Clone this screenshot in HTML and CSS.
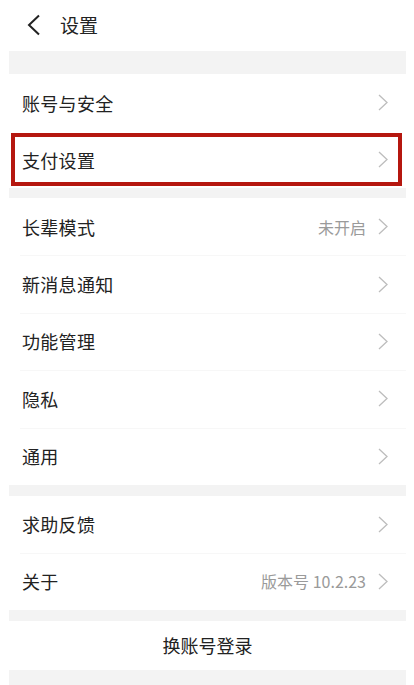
FILE: index.html
```html
<!DOCTYPE html>
<html lang="zh-CN">
<head>
<meta charset="utf-8">
<title>设置</title>
<link rel="stylesheet" href="styles.css">
</head>
<body>
<div class="screen">
  <header class="topbar">
    <svg class="back" width="14" height="22" viewBox="0 0 14 22"><polyline points="12,1.5 2,11 12,20.5" fill="none" stroke="#222" stroke-width="2" stroke-linejoin="miter"/></svg>
    <span class="title">设置</span>
  </header>
  <div class="band band-top"></div>
  <div class="group">
    <div class="row"><span class="label">账号与安全</span><span class="right"><svg class="chev" width="10" height="17" viewBox="0 0 10 17"><polyline points="1,1 9,8.5 1,16" fill="none" stroke="#bdbdbd" stroke-width="1.3"/></svg></span></div>
    <div class="row row-marked"><span class="label">支付设置</span><span class="right"><svg class="chev" width="10" height="17" viewBox="0 0 10 17"><polyline points="1,1 9,8.5 1,16" fill="none" stroke="#bdbdbd" stroke-width="1.3"/></svg></span></div>
  </div>
  <div class="band band-mid"></div>
  <div class="group group-five">
    <div class="row"><span class="label">长辈模式</span><span class="right"><span class="value">未开启</span><svg class="chev" width="10" height="17" viewBox="0 0 10 17"><polyline points="1,1 9,8.5 1,16" fill="none" stroke="#bdbdbd" stroke-width="1.3"/></svg></span></div>
    <div class="row"><span class="label">新消息通知</span><span class="right"><svg class="chev" width="10" height="17" viewBox="0 0 10 17"><polyline points="1,1 9,8.5 1,16" fill="none" stroke="#bdbdbd" stroke-width="1.3"/></svg></span></div>
    <div class="row"><span class="label">功能管理</span><span class="right"><svg class="chev" width="10" height="17" viewBox="0 0 10 17"><polyline points="1,1 9,8.5 1,16" fill="none" stroke="#bdbdbd" stroke-width="1.3"/></svg></span></div>
    <div class="row"><span class="label">隐私</span><span class="right"><svg class="chev" width="10" height="17" viewBox="0 0 10 17"><polyline points="1,1 9,8.5 1,16" fill="none" stroke="#bdbdbd" stroke-width="1.3"/></svg></span></div>
    <div class="row"><span class="label">通用</span><span class="right"><svg class="chev" width="10" height="17" viewBox="0 0 10 17"><polyline points="1,1 9,8.5 1,16" fill="none" stroke="#bdbdbd" stroke-width="1.3"/></svg></span></div>
  </div>
  <div class="band band-mid2"></div>
  <div class="group">
    <div class="row"><span class="label">求助反馈</span><span class="right"><svg class="chev" width="10" height="17" viewBox="0 0 10 17"><polyline points="1,1 9,8.5 1,16" fill="none" stroke="#bdbdbd" stroke-width="1.3"/></svg></span></div>
    <div class="row"><span class="label">关于</span><span class="right"><span class="value">版本号 10.2.23</span><svg class="chev" width="10" height="17" viewBox="0 0 10 17"><polyline points="1,1 9,8.5 1,16" fill="none" stroke="#bdbdbd" stroke-width="1.3"/></svg></span></div>
  </div>
  <div class="band band-small"></div>
  <div class="switch">换账号登录</div>
  <div class="band band-bottom"></div>
</div>
</body>
</html>
```

FILE: styles.css
```css
html, body {
  margin: 0;
  padding: 0;
  background: #ffffff;
}
body {
  font-family: "Noto Sans CJK SC", "Noto Sans", "Liberation Sans", sans-serif;
  color: #222222;
  width: 414px;
  height: 685px;
  overflow: hidden;
}
.screen {
  margin: 0 8px 0 9px;
}
.topbar {
  height: 51px;
  display: flex;
  align-items: center;
  padding-left: 18px;
  box-sizing: border-box;
}
.back {
  display: block;
  margin-top: -1px;
}
.title {
  font-size: 19px;
  margin-left: 19px;
  line-height: 1;
  margin-top: -2px;
}
.band {
  background: #f3f3f3;
}
.band-top { height: 23px; }
.band-mid { height: 10px; }
.band-mid2 { height: 11px; }
.band-small { height: 11px; }
.band-bottom { height: 15px; }
.group {
  display: flex;
  flex-direction: column;
}
.row {
  position: relative;
  height: 57px;
  display: flex;
  align-items: center;
  justify-content: space-between;
  padding: 0 18px 0 13px;
  box-sizing: border-box;
}
.group-five .row {
  height: 57.4px;
}
.row + .row::before {
  content: "";
  position: absolute;
  left: 11px;
  right: 0;
  top: 0;
  border-top: 1px solid #f7f7f7;
}
.label {
  font-size: 18px;
  line-height: 1;
  letter-spacing: 0.3px;
}
.right {
  display: flex;
  align-items: center;
  gap: 12px;
}
.value {
  font-size: 16px;
  color: #9a9a9a;
  line-height: 1;
}
.chev {
  display: block;
}
.row-marked::after {
  content: "";
  position: absolute;
  left: 2px;
  right: 4px;
  top: 2px;
  bottom: 2px;
  border: 4px solid #b5170f;
}
.row-marked::before {
  display: none;
}
.switch {
  height: 49px;
  display: flex;
  align-items: center;
  justify-content: center;
  font-size: 18px;
  line-height: 1;
}
```
